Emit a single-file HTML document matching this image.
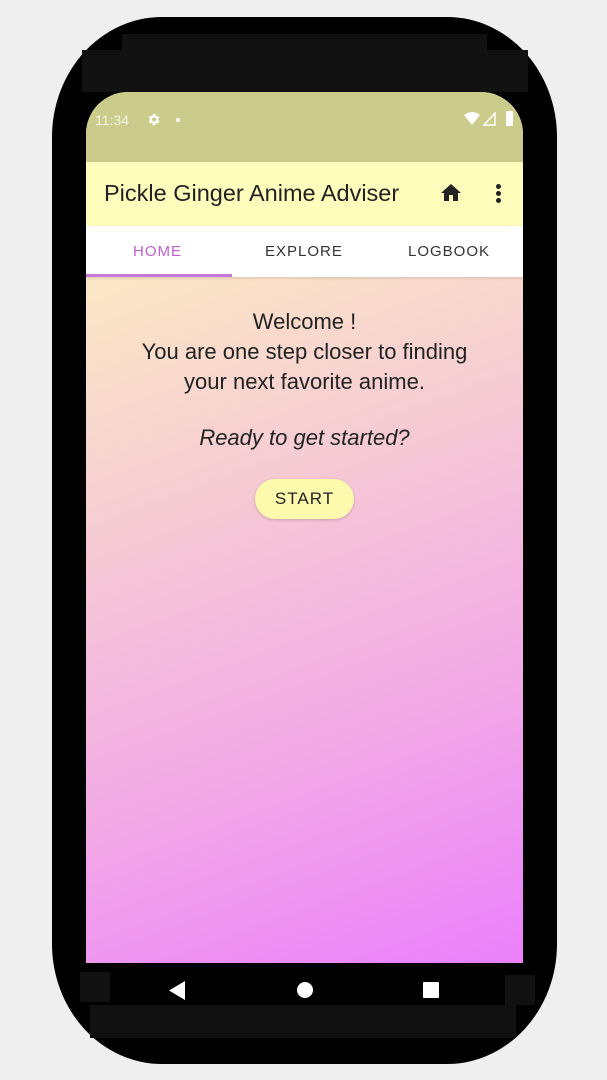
<!DOCTYPE html>
<html><head><style>
body{margin:0;width:607px;height:1080px;background:#efefef;position:relative;overflow:hidden;font-family:"Liberation Sans",sans-serif}
.phone{position:absolute;left:52px;top:17px;width:505px;height:1047px;background:#000;border-radius:110px/120px}
.blk{position:absolute;background:#111}
.screen{position:absolute;left:86px;top:92px;width:437px;height:871px;border-radius:42px 42px 0 0;overflow:hidden;background:linear-gradient(160deg,#fef6c0 0%,#fbe6c6 20%,#f6cdd3 42%,#f2a9e6 72%,#ea80fb 100%)}
.status{position:absolute;left:0;top:0;width:437px;height:70px;background:#cbcc8c;color:#fff;font-size:14px}
.tool{position:absolute;left:0;top:70px;width:437px;height:64px;background:#fffdbb}
.tabs{position:absolute;left:0;top:134px;width:437px;height:51px;background:#fff;box-shadow:0 1px 3px rgba(0,0,0,.15)}
.tab{position:absolute;top:17px;font-size:15px;letter-spacing:1px;color:#333}
.c{position:absolute;left:0;width:437px;text-align:center;color:#222;font-size:22px}
</style></head><body>
<div class="phone"></div>
<div class="blk" style="left:122px;top:34px;width:365px;height:16px"></div>
<div class="blk" style="left:82px;top:50px;width:446px;height:42px"></div>
<div class="blk" style="left:80px;top:972px;width:30px;height:30px"></div>
<div class="blk" style="left:505px;top:975px;width:30px;height:30px"></div>
<div class="blk" style="left:90px;top:1005px;width:426px;height:33px"></div>
<div class="screen">
 <div class="status">
  <span style="position:absolute;left:9px;top:20px;color:#f4f4e4">11:34</span>
  <svg style="position:absolute;left:60px;top:20px" width="15" height="15" viewBox="0 0 24 24"><path fill="#fff" d="M19.4 13a7.5 7.5 0 000-2l2.1-1.6-2-3.5-2.5 1a7 7 0 00-1.7-1L15 3h-4l-.4 2.9a7 7 0 00-1.7 1l-2.5-1-2 3.5L6.6 11a7.5 7.5 0 000 2l-2.1 1.6 2 3.5 2.5-1a7 7 0 001.7 1L11 21h4l.4-2.9a7 7 0 001.7-1l2.5 1 2-3.5zM13 15.5a3.5 3.5 0 110-7 3.5 3.5 0 010 7z"/></svg>
  <div style="position:absolute;left:90px;top:26px;width:4px;height:4px;border-radius:50%;background:#fff"></div>
  <svg style="position:absolute;left:378px;top:20px" width="16" height="14" viewBox="0 0 16 14"><path fill="#fff" d="M0 3Q8-3 16 3L8 13z"/></svg>
  <svg style="position:absolute;left:397px;top:20px" width="13" height="14" viewBox="0 0 13 14"><path fill="none" stroke="#fff" stroke-width="1.5" d="M1 13H12V1z"/></svg>
  <div style="position:absolute;left:420px;top:19px;width:7px;height:15px;background:#fff;border-radius:1px"></div>
 </div>
 <div class="tool">
  <span style="position:absolute;left:18px;top:18px;font-size:23.5px;color:#222">Pickle Ginger Anime Adviser</span>
  <svg style="position:absolute;left:353px;top:19px" width="24" height="24" viewBox="0 0 24 24"><path fill="#222" d="M10 20v-6h4v6h5v-8h3L12 3 2 12h3v8z"/></svg>
  <div style="position:absolute;left:410px;top:22px;width:5px;height:5px;border-radius:50%;background:#222;box-shadow:0 7px 0 #222,0 14px 0 #222"></div>
 </div>
 <div class="tabs">
  <span class="tab" style="left:47px;color:#c060d0">HOME</span>
  <span class="tab" style="left:179px">EXPLORE</span>
  <span class="tab" style="left:322px">LOGBOOK</span>
  <div style="position:absolute;left:0;top:48px;width:146px;height:3px;background:#c878d8"></div>
 </div>
 <div class="c" style="top:215px;line-height:30px">Welcome !<br>You are one step closer to finding<br>your next favorite anime.</div>
 <div class="c" style="top:333px;font-style:italic">Ready to get started?</div>
 <div style="position:absolute;left:169px;top:387px;width:99px;height:40px;border-radius:20px;background:#fdfaae;box-shadow:0 1px 3px rgba(0,0,0,.2);text-align:center;line-height:40px;font-size:17px;letter-spacing:1px;color:#222">START</div>
</div>
<svg style="position:absolute;left:169px;top:981px" width="16" height="19" viewBox="0 0 16 19"><path fill="#fff" d="M16 0V19L0 9.5z"/></svg>
<div style="position:absolute;left:297px;top:982px;width:16px;height:16px;border-radius:50%;background:#fff"></div>
<div style="position:absolute;left:423px;top:982px;width:16px;height:16px;background:#fff;border-radius:1px"></div>
</body></html>
